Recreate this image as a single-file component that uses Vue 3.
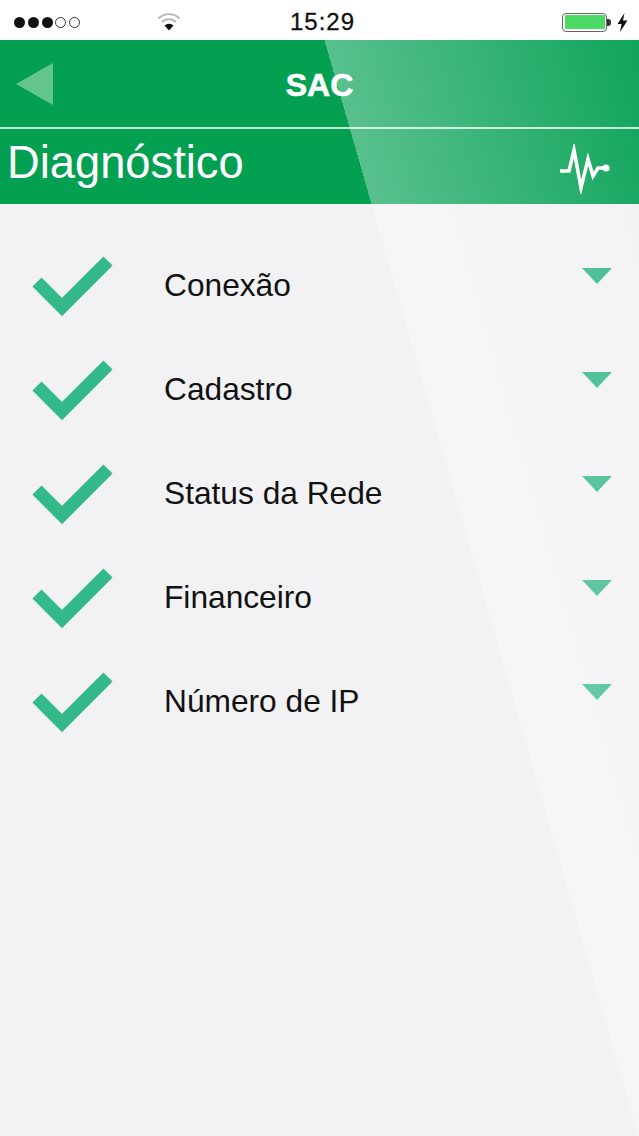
<template>
  <div class="screen">
    <div class="status-bar">
      <div class="signal">
        <span v-for="n in 3" :key="'on' + n" class="dot dot-on"></span>
        <span v-for="n in 2" :key="'off' + n" class="dot dot-off"></span>
      </div>
      <svg class="wifi" width="24" height="20" viewBox="0 0 24 20">
        <path d="M1.5 7.5 A15 15 0 0 1 22.5 7.5" fill="none" stroke="#b4b4b4" stroke-width="1.8" />
        <path d="M5 11 A10 10 0 0 1 19 11" fill="none" stroke="#b4b4b4" stroke-width="1.8" />
        <path d="M7.5 14.5 L12 19.5 L16.5 14.5 A6.5 6.5 0 0 0 7.5 14.5 Z" fill="#111" />
      </svg>
      <span class="clock">15:29</span>
      <div class="battery-group">
        <div class="battery"><div class="battery-fill"></div></div>
        <div class="battery-tip"></div>
        <svg class="bolt" width="11" height="19" viewBox="0 0 11 19">
          <path d="M7.5 0 L0.5 11 L4.5 11 L3 19 L10.5 7.5 L6 7.5 Z" fill="#111" />
        </svg>
      </div>
    </div>

    <header class="header">
      <div class="title-row">
        <svg class="back" width="38" height="42" viewBox="0 0 38 42">
          <path d="M0 21 L37 0 L37 42 Z" fill="#63c48e" />
        </svg>
        <span class="title">SAC</span>
      </div>
      <div class="sub-row">
        <span class="subtitle">Diagnóstico</span>
        <svg class="pulse" width="52" height="50" viewBox="0 0 52 50">
          <path d="M1 27 H10 L15 6 L22 44 L29 15 L34 32 L39 24 H47" fill="none" stroke="#fff" stroke-width="3.5" stroke-linejoin="miter" stroke-miterlimit="8" />
          <circle cx="47" cy="24" r="3.6" fill="#fff" />
        </svg>
      </div>
    </header>

    <ul class="list">
      <li v-for="item in items" :key="item" class="row">
        <svg class="check" width="82" height="62" viewBox="0 0 82 62">
          <path d="M6 27 L31 52 L77 6" fill="none" stroke="#34ba8a" stroke-width="13" stroke-linejoin="miter" />
        </svg>
        <span class="label">{{ item }}</span>
        <svg class="arrow" width="32" height="16" viewBox="0 0 32 16">
          <path d="M1 0 H31 L16 16 Z" fill="#2fb584" />
        </svg>
      </li>
    </ul>

    <div class="glare"></div>
  </div>
</template>

<script setup>
const items = ['Conexão', 'Cadastro', 'Status da Rede', 'Financeiro', 'Número de IP']
</script>

<style>
html,
body {
  margin: 0;
  background: #f2f1f4;
}
</style>

<style scoped>
.screen {
  position: relative;
  width: 639px;
  height: 1136px;
  overflow: hidden;
  background: #f2f1f4;
  font-family: "Liberation Sans", Arial, sans-serif;
}

.status-bar {
  height: 40px;
  box-sizing: border-box;
  padding-top: 4px;
  background: #fff;
  display: flex;
  align-items: center;
}

.signal {
  display: flex;
  gap: 2.75px;
  margin-left: 14px;
  width: 143px;
}

.dot {
  width: 11px;
  height: 11px;
  border-radius: 50%;
  box-sizing: border-box;
}

.dot-on {
  background: #111;
}

.dot-off {
  border: 1.2px solid #333;
}

.wifi {
  margin-top: -2px;
}

.clock {
  margin-left: 109px;
  font-size: 24px;
  letter-spacing: 1px;
  color: #111;
  -webkit-text-stroke: 0.3px #111;
  width: 272px;
}

.battery-group {
  display: flex;
  align-items: center;
}

.battery {
  width: 45px;
  height: 19px;
  box-sizing: border-box;
  border: 1.5px solid #666;
  border-radius: 4px;
  padding: 1.5px;
}

.battery-fill {
  height: 100%;
  background: #4cd964;
  border-radius: 1px;
}

.battery-tip {
  width: 4px;
  height: 7px;
  background: #333;
  border-radius: 0 3px 3px 0;
  margin-right: 6px;
}

.header {
  background: #03a052;
  color: #fff;
}

.title-row {
  height: 89px;
  box-sizing: border-box;
  display: flex;
  align-items: center;
  justify-content: center;
  position: relative;
  border-bottom: 2px solid #c4e8d3;
}

.back {
  position: absolute;
  left: 16px;
  top: 23px;
}

.title {
  font-size: 32px;
  font-weight: 700;
  -webkit-text-stroke: 0.6px #fff;
  margin-top: 3px;
}

.sub-row {
  height: 75px;
  display: flex;
  align-items: center;
  justify-content: space-between;
  padding: 0 28px 0 7px;
}

.subtitle {
  font-size: 45.3px;
  margin-top: -8px;
}

.pulse {
  margin-top: 5px;
}

.list {
  list-style: none;
  margin: 0;
  padding: 30px 0 0;
}

.row {
  height: 104px;
  display: flex;
  align-items: center;
}

.check {
  margin-left: 31px;
  flex: none;
}

.label {
  margin-left: 51px;
  margin-top: -2px;
  font-size: 31.7px;
  color: #111;
  flex: 1;
}

.arrow {
  margin-right: 26px;
  margin-top: -20px;
  flex: none;
}

/* diagonal shine, hard edge from (325,40) to the bottom right corner */
.glare {
  position: absolute;
  inset: 40px 0 0 0;
  pointer-events: none;
  background: linear-gradient(74deg, transparent 67%, rgba(255, 255, 255, 0.34) 67%, rgba(255, 255, 255, 0.05) 100%);
}
</style>
